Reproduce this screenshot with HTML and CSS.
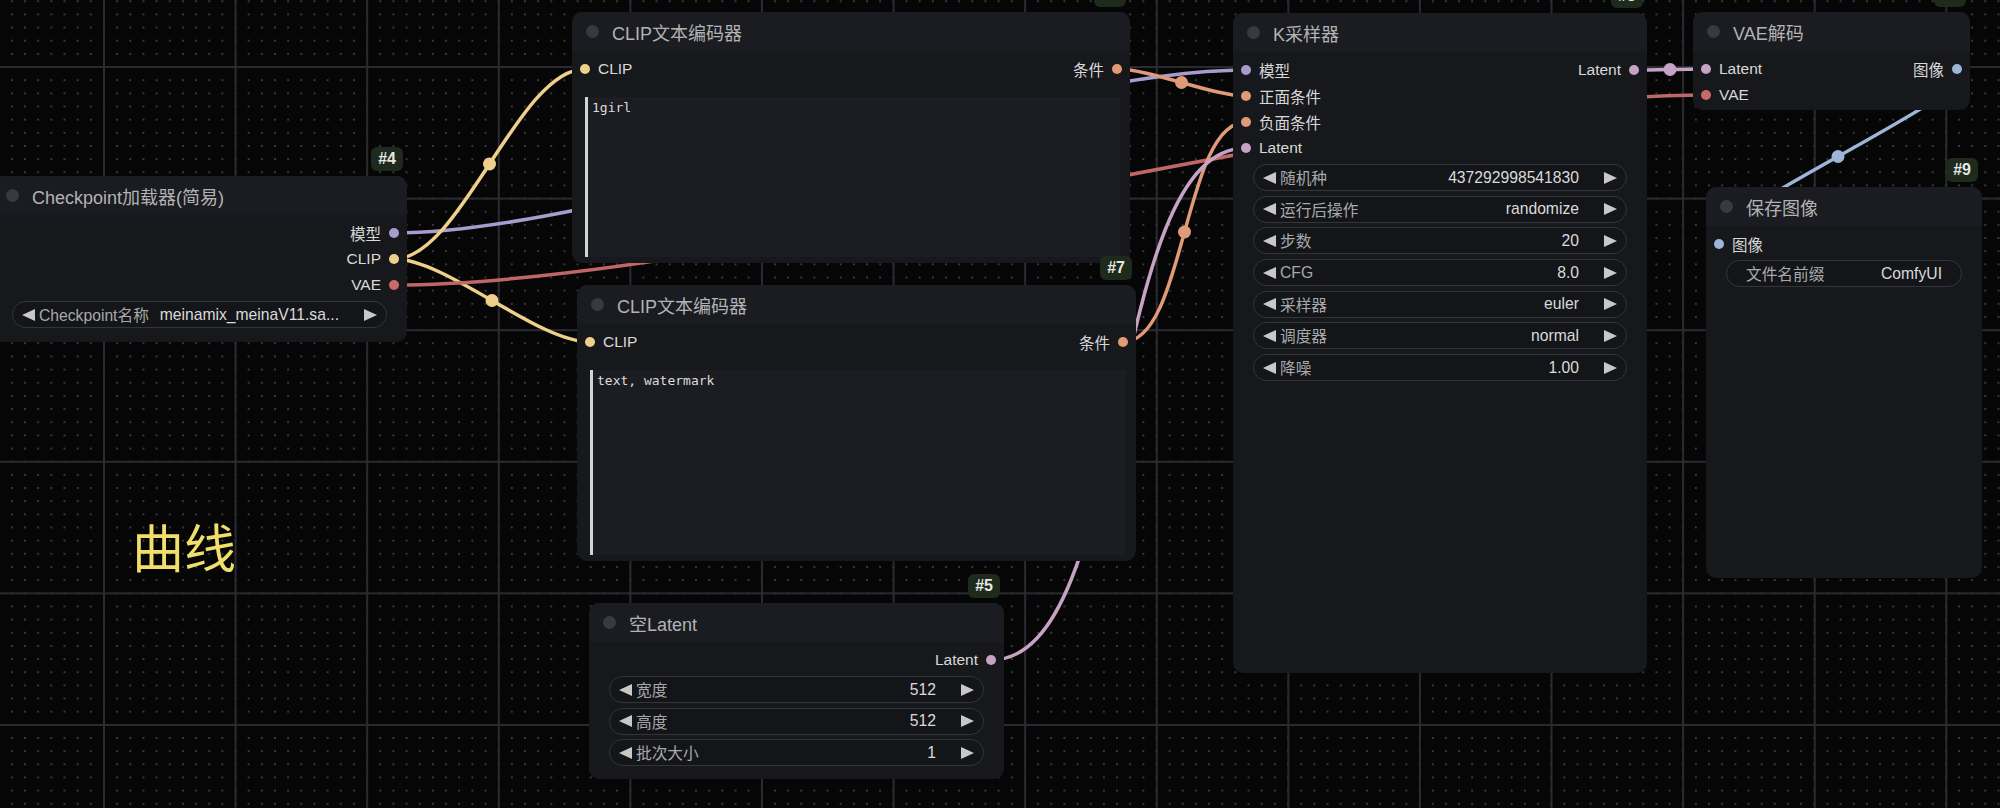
FILE: index.html
```html
<!DOCTYPE html>
<html lang="zh">
<head>
    <meta charset="UTF-8">
    <meta name="viewport" content="width=device-width, initial-scale=1.0">
    <title>ComfyUI 工作流</title>
    <link rel="stylesheet" href="styles.css">
</head>
<body>
<div class="canvas">

    <svg class="links" width="2000" height="808" viewBox="0 0 2000 808">
        <g class="wires">
            <path class="w-model" d="M394 233 C611 233 1029 70 1246 70"/>
            <path class="w-clip" d="M394 259 C461 259 518 69 585 69"/>
            <path class="w-clip" d="M394 259 C447 259 537 342 590 342"/>
            <path class="w-vae" d="M394 285 C725 285 1375 95 1706 95"/>
            <path class="w-cond" d="M1117 69 C1150 69 1213 96 1246 96"/>
            <path class="w-cond" d="M1123 342 C1186 342 1183 122 1246 122"/>
            <path class="w-latent" d="M991 660 C1134 660 1103 148 1246 148"/>
            <path class="w-latent" d="M1634 70 C1652 70 1688 69 1706 69"/>
            <path class="w-image" d="M1957 69 C2031 69 1645 244 1719 244"/>
        </g>
        <g class="centers">
            <circle class="c-model" cx="820" cy="151.5" r="6.5"/>
            <circle class="c-clip" cx="489.5" cy="164" r="6.5"/>
            <circle class="c-clip" cx="492" cy="300.5" r="6.5"/>
            <circle class="c-vae" cx="1050" cy="190" r="6.5"/>
            <circle class="c-cond" cx="1181.5" cy="82.5" r="6.5"/>
            <circle class="c-cond" cx="1184.5" cy="232" r="6.5"/>
            <circle class="c-latent" cx="1118.5" cy="404" r="6.5"/>
            <circle class="c-latent" cx="1670" cy="69.5" r="6.5"/>
            <circle class="c-image" cx="1838" cy="156.5" r="6.5"/>
        </g>
    </svg>

    <!-- Checkpoint loader -->
    <div class="node n-ckpt">
        <div class="badge">#4</div>
        <div class="node-title"><span class="title-dot"></span>Checkpoint加载器(简易)</div>
        <div class="node-body">
            <div class="slots">
                <div class="outputs">
                    <div class="slot">模型<span class="dot model"></span></div>
                    <div class="slot">CLIP<span class="dot clip"></span></div>
                    <div class="slot">VAE<span class="dot vae"></span></div>
                </div>
            </div>
            <div class="widgets">
                <div class="widget"><span class="arrow left"></span><span class="w-label">Checkpoint名称</span><span class="w-value">meinamix_meinaV11.sa...</span><span class="arrow right"></span></div>
            </div>
        </div>
    </div>

    <!-- positive prompt -->
    <div class="node n-clip1">
        <div class="badge">#6</div>
        <div class="node-title"><span class="title-dot"></span>CLIP文本编码器</div>
        <div class="node-body">
            <div class="slots">
                <div class="inputs">
                    <div class="slot"><span class="dot clip"></span>CLIP</div>
                </div>
                <div class="outputs">
                    <div class="slot">条件<span class="dot cond"></span></div>
                </div>
            </div>
            <div class="prompt">1girl</div>
        </div>
    </div>

    <!-- negative prompt -->
    <div class="node n-clip2">
        <div class="badge">#7</div>
        <div class="node-title"><span class="title-dot"></span>CLIP文本编码器</div>
        <div class="node-body">
            <div class="slots">
                <div class="inputs">
                    <div class="slot"><span class="dot clip"></span>CLIP</div>
                </div>
                <div class="outputs">
                    <div class="slot">条件<span class="dot cond"></span></div>
                </div>
            </div>
            <div class="prompt">text, watermark</div>
        </div>
    </div>

    <!-- sampler -->
    <div class="node n-ksampler">
        <div class="badge">#3</div>
        <div class="node-title"><span class="title-dot"></span>K采样器</div>
        <div class="node-body">
            <div class="slots">
                <div class="inputs">
                    <div class="slot"><span class="dot model"></span>模型</div>
                    <div class="slot"><span class="dot cond"></span>正面条件</div>
                    <div class="slot"><span class="dot cond"></span>负面条件</div>
                    <div class="slot"><span class="dot latent"></span>Latent</div>
                </div>
                <div class="outputs">
                    <div class="slot">Latent<span class="dot latent"></span></div>
                </div>
            </div>
            <div class="widgets">
                <div class="widget"><span class="arrow left"></span><span class="w-label">随机种</span><span class="w-value">437292998541830</span><span class="arrow right"></span></div>
                <div class="widget"><span class="arrow left"></span><span class="w-label">运行后操作</span><span class="w-value">randomize</span><span class="arrow right"></span></div>
                <div class="widget"><span class="arrow left"></span><span class="w-label">步数</span><span class="w-value">20</span><span class="arrow right"></span></div>
                <div class="widget"><span class="arrow left"></span><span class="w-label">CFG</span><span class="w-value">8.0</span><span class="arrow right"></span></div>
                <div class="widget"><span class="arrow left"></span><span class="w-label">采样器</span><span class="w-value">euler</span><span class="arrow right"></span></div>
                <div class="widget"><span class="arrow left"></span><span class="w-label">调度器</span><span class="w-value">normal</span><span class="arrow right"></span></div>
                <div class="widget"><span class="arrow left"></span><span class="w-label">降噪</span><span class="w-value">1.00</span><span class="arrow right"></span></div>
            </div>
        </div>
    </div>

    <!-- vae decode -->
    <div class="node n-vae">
        <div class="badge">#8</div>
        <div class="node-title"><span class="title-dot"></span>VAE解码</div>
        <div class="node-body">
            <div class="slots">
                <div class="inputs">
                    <div class="slot"><span class="dot latent"></span>Latent</div>
                    <div class="slot"><span class="dot vae"></span>VAE</div>
                </div>
                <div class="outputs">
                    <div class="slot">图像<span class="dot image"></span></div>
                </div>
            </div>
        </div>
    </div>

    <!-- save image -->
    <div class="node n-save">
        <div class="badge">#9</div>
        <div class="node-title"><span class="title-dot"></span>保存图像</div>
        <div class="node-body">
            <div class="slots">
                <div class="inputs">
                    <div class="slot"><span class="dot image"></span>图像</div>
                </div>
            </div>
            <div class="widgets">
                <div class="widget text-widget"><span class="w-label">文件名前缀</span><span class="w-value">ComfyUI</span></div>
            </div>
        </div>
    </div>

    <!-- empty latent -->
    <div class="node n-latent">
        <div class="badge">#5</div>
        <div class="node-title"><span class="title-dot"></span>空Latent</div>
        <div class="node-body">
            <div class="slots">
                <div class="outputs">
                    <div class="slot">Latent<span class="dot latent"></span></div>
                </div>
            </div>
            <div class="widgets">
                <div class="widget"><span class="arrow left"></span><span class="w-label">宽度</span><span class="w-value">512</span><span class="arrow right"></span></div>
                <div class="widget"><span class="arrow left"></span><span class="w-label">高度</span><span class="w-value">512</span><span class="arrow right"></span></div>
                <div class="widget"><span class="arrow left"></span><span class="w-label">批次大小</span><span class="w-value">1</span><span class="arrow right"></span></div>
            </div>
        </div>
    </div>

    <div class="note">曲线</div>
</div>
</body>
</html>
```

FILE: styles.css
```css
body {
    margin: 0;
    background-color: #060607;
    font-family: "Liberation Sans", "Noto Sans CJK SC", sans-serif;
    color: #d6d6d6;
}

.canvas {
    position: relative;
    width: 2000px;
    height: 808px;
    overflow: hidden;
    background-color: #060607;
    background-image:
        linear-gradient(90deg, #2a2b30 2px, transparent 2px),
        linear-gradient(#2a2b30 2px, transparent 2px),
        radial-gradient(circle, #393a3f 1.1px, transparent 1.5px);
    background-size: 131.6px 131.6px, 131.6px 131.6px, 13.16px 13.16px;
    background-position: 103px 0, 0 66px, 5.3px 7.8px;
}

/* links */
.links {
    position: absolute;
    left: 0;
    top: 0;
    z-index: 0;
}
.wires path {
    fill: none;
    stroke-width: 3.5;
    stroke-linecap: round;
}
.w-model { stroke: #a99bcd; }
.w-clip { stroke: #efd08b; }
.w-vae { stroke: #c06666; }
.w-cond { stroke: #e09a77; }
.w-latent { stroke: #c6a3c4; }
.w-image { stroke: #9db5d8; }
.c-model { fill: #a99bcd; }
.c-clip { fill: #efd08b; }
.c-vae { fill: #c06666; }
.c-cond { fill: #e09a77; }
.c-latent { fill: #c6a3c4; }
.c-image { fill: #9db5d8; }

/* nodes */
.node {
    position: absolute;
    z-index: 1;
    display: flex;
    flex-direction: column;
    background-color: #17181c;
    border-radius: 10px;
    box-sizing: border-box;
}
.n-ckpt { left: -8px; top: 176px; width: 415px; height: 166px; }
.n-clip1 { left: 572px; top: 12px; width: 558px; height: 251px; }
.n-clip2 { left: 577px; top: 285px; width: 559px; height: 276px; }
.n-ksampler { left: 1233px; top: 13px; width: 414px; height: 660px; }
.n-vae { left: 1693px; top: 12px; width: 277px; height: 98px; }
.n-save { left: 1706px; top: 187px; width: 276px; height: 391px; }
.n-latent { left: 589px; top: 603px; width: 415px; height: 176px; }

.node-title {
    height: 39px;
    flex: none;
    display: flex;
    align-items: center;
    gap: 13px;
    padding-left: 14px;
    background-color: #1b1c21;
    border-radius: 10px 10px 0 0;
    color: #b3b3b3;
    font-size: 18px;
}
.title-dot {
    width: 13px;
    height: 13px;
    border-radius: 50%;
    background-color: #383a40;
}

.badge {
    position: absolute;
    right: 4px;
    top: -29px;
    height: 24px;
    line-height: 24px;
    padding: 0 7px;
    border-radius: 6px;
    background-color: #1d2a1c;
    color: #e6e6e6;
    font-weight: bold;
    font-size: 16px;
}

.node-body {
    flex: 1;
    display: flex;
    flex-direction: column;
    padding-top: 5px;
    min-height: 0;
}

.slots {
    display: flex;
    justify-content: space-between;
}
.inputs, .outputs {
    display: flex;
    flex-direction: column;
}
.outputs {
    margin-left: auto;
    align-items: flex-end;
}
.slot {
    height: 26px;
    display: flex;
    align-items: center;
    gap: 8px;
    padding: 0 8px;
    font-size: 15.5px;
    color: #d8d8d8;
}
.dot {
    width: 10px;
    height: 10px;
    border-radius: 50%;
}
.dot.model { background-color: #a99bcd; }
.dot.clip { background-color: #efd08b; }
.dot.vae { background-color: #c96a6a; }
.dot.cond { background-color: #e09a77; }
.dot.latent { background-color: #c6a3c4; }
.dot.image { background-color: #9db5d8; }

/* widgets */
.widgets {
    display: flex;
    flex-direction: column;
    gap: 4.7px;
    padding: 3px 20px 0;
}
.widget {
    height: 27px;
    box-sizing: border-box;
    display: flex;
    align-items: center;
    padding: 0 9px;
    border: 1px solid #33353b;
    border-radius: 14px;
    background-color: #141519;
    font-size: 15.7px;
    white-space: nowrap;
}
.w-label {
    margin-left: 4px;
    color: #a9a9a9;
}
.w-value {
    margin-left: auto;
    margin-right: 25px;
    color: #dadada;
}
.text-widget {
    padding: 0 19px;
}
.text-widget .w-label {
    margin-left: 0;
}
.text-widget .w-value {
    margin-right: 0;
}
.arrow {
    width: 0;
    height: 0;
    border-top: 6.5px solid transparent;
    border-bottom: 6.5px solid transparent;
}
.arrow.left { border-right: 13px solid #c8c8c8; }
.arrow.right { border-left: 13px solid #c8c8c8; }

/* prompt text */
.prompt {
    flex: 1;
    margin: 15px 10px 6px 13px;
    padding: 3px 4px;
    background-color: #1c1d22;
    border-left: 3px solid #d2d3d5;
    font-family: "DejaVu Sans Mono", "Liberation Mono", monospace;
    font-size: 13px;
    line-height: 16px;
    color: #dcdcdc;
}

.note {
    position: absolute;
    z-index: 1;
    left: 132px;
    top: 520px;
    font-family: "Noto Sans CJK SC", sans-serif;
    font-size: 52px;
    line-height: 1;
    color: #f1df6b;
}
```
